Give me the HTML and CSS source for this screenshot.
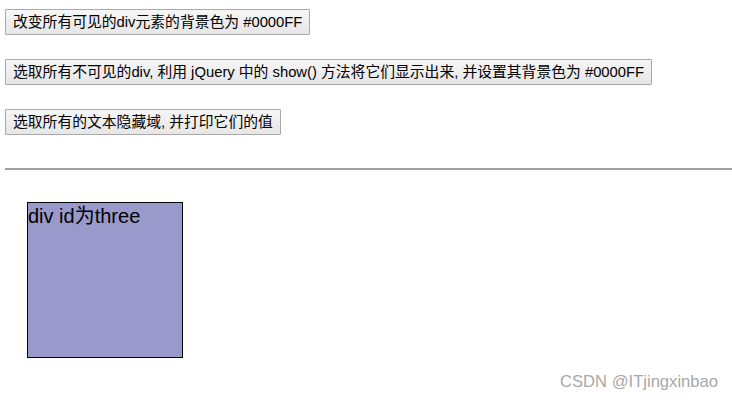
FILE: index.html
```html
<!DOCTYPE html>
<html>
<head>
<meta charset="utf-8">
<link rel="stylesheet" href="styles.css">
</head>
<body>
<div class="page">
  <div class="row first"><button class="btn">改变所有可见的div元素的背景色为 #0000FF</button></div>
  <div class="row"><button class="btn">选取所有不可见的div, 利用 jQuery 中的 show() 方法将它们显示出来, 并设置其背景色为 #0000FF</button></div>
  <div class="row"><button class="btn">选取所有的文本隐藏域, 并打印它们的值</button></div>
  <hr class="rule">
  <div class="box" id="three">div id为three</div>
  <div class="mark">CSDN @ITjingxinbao</div>
</div>
</body>
</html>
```
FILE: styles.css
```css
html, body {
  margin: 0;
  padding: 0;
  background: #fff;
}
.page {
  padding: 9px 0 0 5px;
  font-family: "Liberation Sans", "Noto Sans CJK SC", sans-serif;
  position: relative;
  height: 391px;
}
.row {
  margin-bottom: 24px;
  height: 26px;
}
.btn {
  font-family: "Liberation Sans", "Noto Sans CJK SC", sans-serif;
  font-size: 14.8px;
  height: 26px;
  padding: 0 7px;
  color: #000;
  background: linear-gradient(#f6f6f6, #e6e6e6);
  border: 1px solid #a9a9a9;
  border-radius: 1px;
  line-height: 24px;
}
.rule {
  margin: 33px 0 0 0;
  border: 0;
  border-top: 2px solid #a0a0a0;
  height: 0;
}
.box {
  margin: 32px 0 0 22px;
  width: 154px;
  height: 154px;
  border: 1px solid #000;
  background: #9999cc;
  font-size: 20px;
  line-height: 26px;
  color: #000;
}
.mark {
  position: absolute;
  right: 14px;
  bottom: 8px;
  font-size: 16.6px;
  color: #a8a8a8;
}
```
